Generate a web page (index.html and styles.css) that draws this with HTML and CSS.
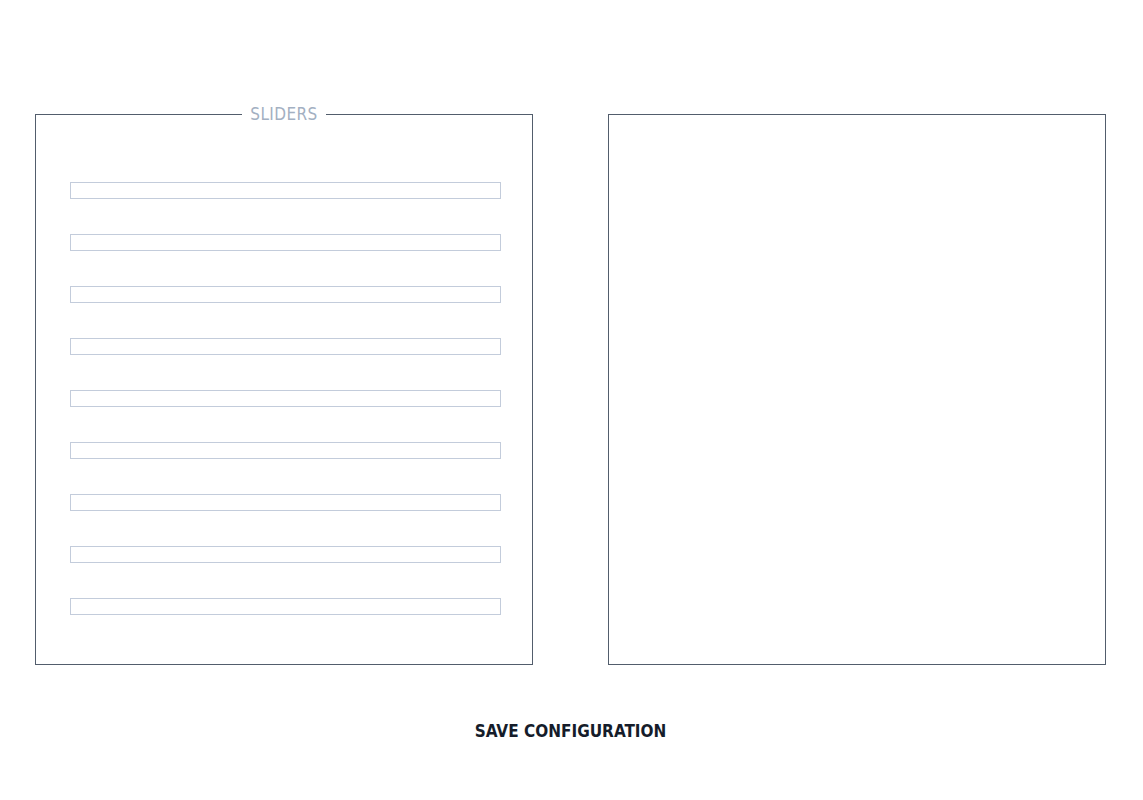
FILE: index.html
```html
<!DOCTYPE html>
<html>
<head>
<meta charset="utf-8">
<link rel="stylesheet" href="styles.css">
</head>
<body>
<main class="page">
  <div class="panels">
    <section class="panel sliders">
      <h2 class="legend">SLIDERS</h2>
      <div class="slider-list">
        <div class="slider"></div>
        <div class="slider"></div>
        <div class="slider"></div>
        <div class="slider"></div>
        <div class="slider"></div>
        <div class="slider"></div>
        <div class="slider"></div>
        <div class="slider"></div>
        <div class="slider"></div>
      </div>
    </section>
    <section class="panel preview"></section>
  </div>
  <div class="actions">
    <button class="save">SAVE CONFIGURATION</button>
  </div>
</main>
</body>
</html>
```
FILE: styles.css
```css
html, body {
  margin: 0;
  padding: 0;
  background: #ffffff;
}
body {
  font-family: "DejaVu Sans Condensed", "DejaVu Sans", sans-serif;
}
.page {
  padding: 114px 37px 0 35px;
}
.panels {
  display: grid;
  grid-template-columns: 498px 498px;
  column-gap: 75px;
}
.panel {
  box-sizing: border-box;
  height: 551px;
  border: 1px solid #525d6c;
  position: relative;
}
.sliders {
  padding: 67px 31px 0 34px;
}
.legend {
  position: absolute;
  top: -10px;
  left: 0;
  right: 0;
  width: max-content;
  margin: 0 auto;
  padding: 0 8px;
  background: #ffffff;
  font-size: 17px;
  font-weight: normal;
  line-height: 19px;
  color: #a3b0c2;
  letter-spacing: 0.4px;
}
.slider-list {
  display: flex;
  flex-direction: column;
  gap: 35px;
}
.slider {
  height: 17px;
  box-sizing: border-box;
  border: 1px solid #c3ccdb;
}
.actions {
  display: flex;
  justify-content: center;
  padding-top: 56px;
}
.save {
  background: none;
  border: none;
  padding: 0;
  font-family: "DejaVu Sans Condensed", "DejaVu Sans", sans-serif;
  font-weight: bold;
  font-size: 17px;
  color: #151c2a;
}
```
